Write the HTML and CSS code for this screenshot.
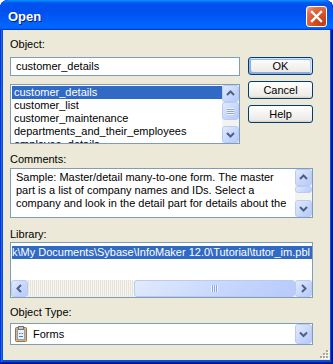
FILE: index.html
```html
<!DOCTYPE html>
<html lang="en">
<head>
  <meta charset="UTF-8" />
  <title>Open</title>
  <link rel="stylesheet" href="styles.css">
</head>
<body>
  <div class="window">
    <div class="titlebar">
      <span class="title">Open</span>
      <button class="close" aria-label="Close">
        <svg width="19" height="19" viewBox="0 0 19 19"><path d="M5 5 L14 14 M14 5 L5 14" stroke="#fff" stroke-width="2.4" stroke-linecap="square"/></svg>
      </button>
    </div>

    <div class="client">
      <!-- Object name, object list and the dialog buttons -->
      <div class="top">
        <div class="fields">
          <div class="label">Object:</div>
          <div class="textbox">customer_details</div>
          <div class="listbox">
            <ul class="items">
              <li class="selected">customer_details</li>
              <li>customer_list</li>
              <li>customer_maintenance</li>
              <li>departments_and_their_employees</li>
              <li>employee_details</li>
            </ul>
            <div class="vscroll">
              <div class="sb-btn"><svg width="15" height="15" viewBox="0 0 15 15"><polyline points="4,9 7.5,5.5 11,9" fill="none" stroke="#4d6185" stroke-width="2"/></svg></div>
              <div class="sb-thumb tall">
                <svg width="7" height="7" viewBox="0 0 7 7"><path d="M0 0.5h7M0 2.5h7M0 4.5h7M0 6.5h7" stroke="#eef3ff"/><path d="M0 1.5h7M0 3.5h7M0 5.5h7" stroke="#8ca6dc"/></svg>
              </div>
              <div class="sb-track"></div>
              <div class="sb-btn"><svg width="15" height="15" viewBox="0 0 15 15"><polyline points="4,6 7.5,9.5 11,6" fill="none" stroke="#4d6185" stroke-width="2"/></svg></div>
            </div>
          </div>
        </div>
        <div class="buttons">
          <button class="btn default">OK</button>
          <button class="btn">Cancel</button>
          <button class="btn">Help</button>
        </div>
      </div>

      <div class="label comments-label">Comments:</div>
      <div class="memo">
        <div class="memo-text">Sample: Master/detail many-to-one form. The master<br>part is a list of company names and IDs. Select a<br>company and look in the detail part for details about the</div>
        <div class="vscroll">
          <div class="sb-btn"><svg width="15" height="15" viewBox="0 0 15 15"><polyline points="4,9 7.5,5.5 11,9" fill="none" stroke="#4d6185" stroke-width="2"/></svg></div>
          <div class="sb-thumb small"></div>
          <div class="sb-track"></div>
          <div class="sb-btn"><svg width="15" height="15" viewBox="0 0 15 15"><polyline points="4,6 7.5,9.5 11,6" fill="none" stroke="#4d6185" stroke-width="2"/></svg></div>
        </div>
      </div>

      <div class="label library-label">Library:</div>
      <div class="library">
        <div class="library-row">k\My Documents\Sybase\InfoMaker 12.0\Tutorial\tutor_im.pbl</div>
        <div class="hscroll">
          <div class="sb-btn"><svg width="15" height="15" viewBox="0 0 15 15"><polyline points="9,4 5.5,7.5 9,11" fill="none" stroke="#4d6185" stroke-width="2"/></svg></div>
          <div class="sb-track dotted"></div>
          <div class="sb-thumb wide">
            <svg width="7" height="7" viewBox="0 0 7 7"><path d="M0.5 0v7M2.5 0v7M4.5 0v7M6.5 0v7" stroke="#eef3ff"/><path d="M1.5 0v7M3.5 0v7M5.5 0v7" stroke="#8ca6dc"/></svg>
          </div>
          <div class="sb-btn"><svg width="15" height="15" viewBox="0 0 15 15"><polyline points="6,4 9.5,7.5 6,11" fill="none" stroke="#4d6185" stroke-width="2"/></svg></div>
        </div>
      </div>

      <div class="label type-label">Object Type:</div>
      <div class="combo">
        <svg class="combo-icon" width="12" height="16" viewBox="0 0 12 16">
          <rect x="0.5" y="1.5" width="11" height="14" rx="1" fill="#d8b27a" stroke="#977245"/>
          <rect x="2.5" y="3.5" width="7" height="10" fill="#eaf0fa" stroke="#8aa0c4"/>
          <rect x="3.5" y="0.5" width="5" height="3" fill="#c3c7ce" stroke="#6d7480"/>
          <path d="M4 7.5h1.5M6.5 7.5h1.5M4 10.5h4" stroke="#5a78aa"/>
        </svg>
        <span class="combo-text">Forms</span>
        <div class="sb-btn combo-btn"><svg width="15" height="18" viewBox="0 0 15 18"><polyline points="4,7.5 7.5,11 11,7.5" fill="none" stroke="#4d6185" stroke-width="2"/></svg></div>
      </div>

      <svg class="grip" width="10" height="10" viewBox="0 0 10 10">
        <path d="M8 2h2v2h-2zM5 5h2v2h-2zM8 5h2v2h-2zM2 8h2v2h-2zM5 8h2v2h-2zM8 8h2v2h-2z" fill="#fff"/>
        <path d="M7 1h2v2h-2zM4 4h2v2h-2zM7 4h2v2h-2zM1 7h2v2h-2zM4 7h2v2h-2zM7 7h2v2h-2z" fill="#aca899"/>
      </svg>
    </div>
  </div>
</body>
</html>
```

FILE: styles.css
```css
body {
  margin: 0;
  background: #fff;
  font-family: "Liberation Sans", Arial, sans-serif;
  font-size: 11px;
  color: #000;
}

.window {
  width: 333px;
  height: 364px;
  display: flex;
  flex-direction: column;
  background: #0a4fdc;
  border-radius: 8px 8px 0 0;
  box-shadow: inset -1px -1px #00138c, inset 1px 1px #0831d9, inset -2px -2px #001ea0, inset 2px 2px #166aee;
  overflow: hidden;
}

.titlebar {
  flex: none;
  height: 30px;
  display: flex;
  align-items: center;
  padding: 0 6px 0 8px;
  background: linear-gradient(180deg, #0997ff, #0053ee 10%, #0050ee 40%, #0066ff 85%, #0066ff 92%, #005bff 95%, #003dd7 97%, #003dd7);
  border-radius: 8px 8px 0 0;
}

.title {
  flex: 1;
  margin-top: 3px;
  color: #fff;
  font-size: 13px;
  font-weight: bold;
  line-height: 15px;
  text-shadow: 1px 1px #0a1883;
}

.close {
  width: 21px;
  height: 21px;
  margin-top: 3px;
  padding: 0;
  border: 1px solid #fff;
  border-radius: 3px;
  background: radial-gradient(circle at 80% 85%, #c13a14, #d65229 45%, #e0714d 75%, #f3ab90 100%);
  display: flex;
  align-items: center;
  justify-content: center;
}

.client {
  flex: 1;
  position: relative;
  margin: 0 3px 4px;
  padding: 8px 17px 0 7px;
  background: #ece9d8;
  display: flex;
  flex-direction: column;
}

.label {
  line-height: 13px;
}

.top {
  display: grid;
  grid-template-columns: 230px 65px;
  column-gap: 8px;
}

.fields {
  display: flex;
  flex-direction: column;
}

.textbox {
  margin-top: 6px;
  height: 19px;
  box-sizing: border-box;
  border: 1px solid #7f9db9;
  background: #fff;
  padding-left: 5px;
  line-height: 17px;
}

.listbox {
  margin-top: 8px;
  height: 60px;
  box-sizing: border-box;
  border: 1px solid #7f9db9;
  background: #fff;
  display: flex;
  overflow: hidden;
}

.items {
  flex: 1;
  list-style: none;
  margin: 0;
  padding: 1px 0 0 1px;
  overflow: hidden;
}

.items li {
  height: 13px;
  line-height: 13px;
  padding-left: 2px;
  white-space: nowrap;
}

.items li.selected,
.library-row {
  background: #316ac5;
  color: #fff;
}

.buttons {
  display: flex;
  flex-direction: column;
  gap: 6px;
  padding-top: 19px;
}

.btn {
  height: 18px;
  padding: 0;
  border: 1px solid #003c74;
  border-radius: 3px;
  background: linear-gradient(180deg, #fff, #ecebe6 86%, #d6d0c5);
  font: inherit;
  color: #000;
}

.btn.default {
  box-shadow: inset -1px 1px #cee7ff, inset 1px 2px #98b8ea, inset -2px 2px #bcd4f6, inset 1px -1px #89ade4, inset 2px -2px #89ade4;
}

/* scroll bars */
.vscroll {
  flex: none;
  width: 17px;
  display: flex;
  flex-direction: column;
  background: #f4f3ee;
}

.hscroll {
  flex: none;
  height: 17px;
  display: flex;
  background: #f4f3ee;
}

.sb-btn,
.sb-thumb {
  flex: none;
  width: 17px;
  height: 17px;
  box-sizing: border-box;
  border: 1px solid #b9cbf5;
  border-radius: 3px;
  background: linear-gradient(135deg, #e1eafe, #c5d5fc 60%, #b7cafa);
  display: flex;
  align-items: center;
  justify-content: center;
}

.sb-thumb.tall {
  height: 18px;
}

.sb-thumb.small {
  height: 7px;
}

.sb-thumb.wide {
  width: 161px;
}

.sb-track {
  flex: 1;
}

.sb-track.dotted {
  background: repeating-linear-gradient(90deg, #e6e4da 0 1px, #f6f5f0 1px 2px);
}

.comments-label {
  margin-top: 9px;
}

.memo {
  margin-top: 2px;
  height: 50px;
  box-sizing: border-box;
  border: 1px solid #7f9db9;
  background: #fff;
  display: flex;
  overflow: hidden;
}

.memo-text {
  flex: 1;
  padding: 2px 0 0 5px;
  line-height: 13px;
  white-space: nowrap;
  overflow: hidden;
}

.library-label {
  margin-top: 10px;
}

.library {
  margin-top: 1px;
  height: 56px;
  box-sizing: border-box;
  border: 1px solid #7f9db9;
  background: #fff;
  display: flex;
  flex-direction: column;
  justify-content: space-between;
}

.library-row {
  margin: 3px 0 0 1px;
  height: 13px;
  line-height: 13px;
  white-space: nowrap;
  overflow: hidden;
}

.type-label {
  margin-top: 8px;
}

.combo {
  margin-top: 4px;
  height: 22px;
  box-sizing: border-box;
  border: 1px solid #7f9db9;
  background: #fff;
  display: flex;
  align-items: center;
}

.combo-icon {
  margin-left: 4px;
}

.combo-text {
  flex: 1;
  margin-left: 6px;
}

.combo-btn {
  height: 20px;
}

.grip {
  position: absolute;
  right: 1px;
  bottom: 1px;
}
```
